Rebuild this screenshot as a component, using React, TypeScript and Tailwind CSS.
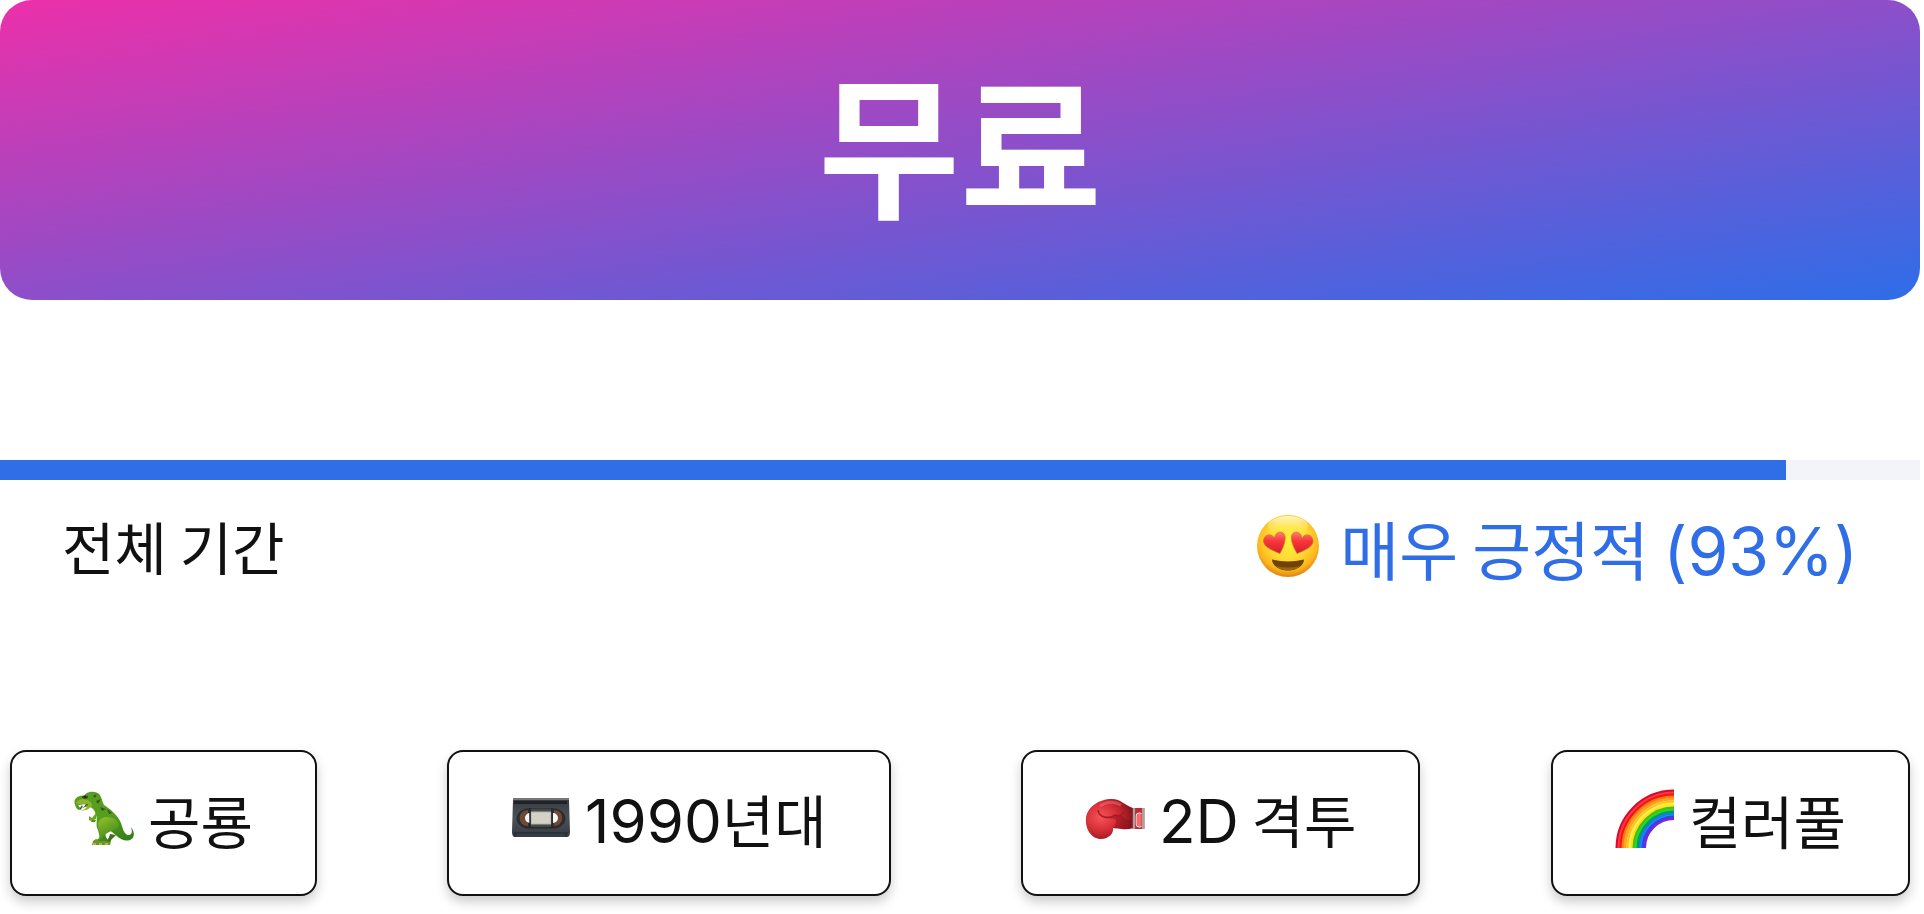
import type { ReactNode } from "react";

const HeartEyes = () => (
  <svg viewBox="0 0 64 64" className="size-16 shrink-0" aria-hidden="true">
    <defs>
      <radialGradient id="face" cx="50%" cy="40%" r="62%">
        <stop offset="0" stopColor="#fff03c" />
        <stop offset="0.5" stopColor="#ffdc35" />
        <stop offset="0.8" stopColor="#fcb51d" />
        <stop offset="1" stopColor="#d87c09" />
      </radialGradient>
      <linearGradient id="gloss" x1="0" y1="0" x2="0" y2="1">
        <stop offset="0" stopColor="#fffbd8" stopOpacity="0.9" />
        <stop offset="1" stopColor="#ffe84a" stopOpacity="0" />
      </linearGradient>
      <linearGradient id="heart" x1="0" y1="0" x2="0" y2="1">
        <stop offset="0" stopColor="#ff7d7b" />
        <stop offset="0.4" stopColor="#f8383d" />
        <stop offset="1" stopColor="#d81d2b" />
      </linearGradient>
    </defs>
    <circle cx="32" cy="32" r="31" fill="url(#face)" />
    <ellipse cx="32" cy="12" rx="20" ry="10" fill="url(#gloss)" />
    <path d="M16 45.500q16 4 32 0c0 6-7 11-16 11s-16-5-16-11Z" fill="#704307" />
    <path d="M20 52q12 3 24 0-5 4.500-12 4.500t-12-4.500Z" fill="#9a6411" />
    <path d="M24 39.500C15 36 6.500 32 7.500 26c1-6 8-7 11-2 1-7 9-8 10.500-2 1 5-2 12-5 17.500Z" fill="url(#heart)" stroke="#d8771b" strokeWidth="0.7" />
    <path d="M41 39.500c9-3.500 17-7.500 16-13.500-1-6-8-7-11-2-1-7-9-8-10.500-2-1 5 2.500 12 5.500 17.500Z" fill="url(#heart)" stroke="#d8771b" strokeWidth="0.7" />
  </svg>
);

const Dinosaur = () => (
  <svg viewBox="0 -2 60 60" className="size-15 shrink-0" aria-hidden="true">
    <defs>
      <linearGradient id="skin" x1="0.2" y1="0" x2="0.7" y2="1">
        <stop offset="0" stopColor="#579d22" />
        <stop offset="0.5" stopColor="#55a01b" />
        <stop offset="1" stopColor="#35801b" />
      </linearGradient>
      <linearGradient id="thigh" x1="0" y1="0" x2="0.5" y2="1">
        <stop offset="0" stopColor="#97c22c" />
        <stop offset="1" stopColor="#3e8819" />
      </linearGradient>
    </defs>
    <path d="M36 43q-1 5-4 7l-4 2 1 2h7l1-5 5-5Z" fill="#3c7015" />
    <path d="M0.500 12C0 7 5 4 10 5c2-5 12-6 16-1 2 3 2 7 4 10 6 4 13 9 17 18 2 6 3 11 7 12 5 0 4-5 3-8 4 5 4 11-1 13-9 3-15-7-21-10-5 3-4 6-1 10l-1 3H20l2-3 4-2-2-8c-3-5 0-9-2-15-1-5-4-8-7-8-4-1-7 1-10 3-2 0-4-4-4.500-7Z" fill="url(#skin)" />
    <path d="M33 26c-7 0-11 6-8 13 2 4 0 8-1 11l4-3c3-7 15-7 17-12 1-5-5-9-12-9Z" fill="url(#thigh)" />
    <path d="M1.500 12c4 2 9 0 13 1-2 5-5 6-8 6 2 1 6 0 8-1l4-4c-4-7-12-8-17-2Z" fill="#8db42b" />
    <path d="m4 14 10-1-7 6-1-1Z" fill="#364f1a" />
    <path d="m4 14 2 3 2-3 1 3 3-4Zm3 5 1-3 2 2Z" fill="#fff" />
    <ellipse cx="11" cy="6" rx="3" ry="1.800" fill="#32511a" />
    <circle cx="11" cy="6" r="1" fill="#171b0d" />
    <path d="m19 5 4-2-2 4Zm3 5 5-2-3 5Zm4 6 6 2-4 2Zm7 2 5 4-3 1Z" fill="#3c541b" />
    <path d="M22 22l-4 5-3-2 0 4 2 1 5-2Z" fill="#69a91e" />
    <path d="M18 29h4l-1 2h-4Z" fill="#568a19" />
    <path d="m19 50 3-2 3 2h7l4 1v3H18Z" fill="#6c961d" />
    <path d="M19 53h3m3 0h3m3 0h3" stroke="#e5d5a0" strokeWidth="1" />
  </svg>
);

const Videocassette = () => (
  <svg viewBox="0 0 60 60" className="size-15 shrink-0" aria-hidden="true">
    <defs>
      <linearGradient id="tape" x1="0" y1="0" x2="0" y2="1">
        <stop offset="0" stopColor="#343a3f" />
        <stop offset="0.5" stopColor="#4b5257" />
        <stop offset="1" stopColor="#353b40" />
      </linearGradient>
    </defs>
    <path d="M2 9h56v2l1 32q0 5-3 5H4q-3 0-3-5L2 11Z" fill="url(#tape)" />
    <path d="M2 10h56" stroke="#8b8e90" strokeWidth="1.5" />
    <path d="M3 12h53v3H3Z" fill="#1f2327" />
    <path d="M3 44h54M4 44v4m51-4v4" stroke="#202428" />
    <path d="M15 20h30q9 3 9 9.500t-9 9.500H15q-9-3-9-9.500t9-9.500Z" fill="#302d2b" stroke="#24282b" />
    <path d="M17 21c-11 0-11 16 0 16Zm26 0c11 0 11 16 0 16Z" fill="#6e4938" />
    <path d="M19 24a5 5 0 0 0 0 10ZM42 24a5 5 0 0 1 0 10Z" fill="#faf9f5" />
    <path d="M19 20h23v18H19Z" fill="#42484b" />
    <path d="M20 23h20v12H20Z" fill="#d5d1c4" stroke="#bbb5a7" />
    <path d="M19 19v20m22-20v20" stroke="#202629" strokeWidth="1.5" />
  </svg>
);

const BoxingGlove = () => (
  <svg viewBox="0 0 60 60" className="size-15 shrink-0" aria-hidden="true">
    <defs>
      <radialGradient id="leather" cx="32%" cy="45%" r="65%">
        <stop offset="0" stopColor="#f8555a" />
        <stop offset="0.55" stopColor="#d32c35" />
        <stop offset="1" stopColor="#8d151e" />
      </radialGradient>
    </defs>
    <path d="M48 19h11v21H48Z" fill="#c9252e" />
    <path d="M1 29C2 18 14 10 27 10c9 0 12 6 21 9v20q-6 2-11 1-4-1-9-1c1 5-4 11-12 11C7 50 0 41 1 29Z" fill="url(#leather)" />
    <path d="M14 23c3 8 11 5 16 7 3 2 0 7-2 9 5 1 13 2 20 0V31C38 34 39 22 30 27c-8 2-13 0-16-4Z" fill="#8e0f19" opacity="0.5" />
    <path d="M13 21c1 9 12 9 17 5 5 2 8-1 9-4" fill="none" stroke="#a71925" strokeWidth="1.5" />
    <path d="M15 17q10-7 21-1" fill="none" stroke="#ff8588" strokeWidth="3" opacity="0.4" />
    <rect x="51" y="24" width="7" height="14" rx="3" fill="#ff6669" stroke="#eee" />
    <path d="M49 19v21M58 19v21" stroke="#84595b" strokeWidth="3" />
    <path d="M49 19v21M58 19v21" stroke="#e7e1df" strokeWidth="1" />
  </svg>
);

const bands = [
  ["#dc0924", 57], ["#ff3151", 55], ["#e91a13", 53], ["#ff7908", 51], ["#ffa323", 49],
  ["#ffc21a", 46], ["#fff04c", 44], ["#ffe01b", 42], ["#49bd13", 40], ["#25dc28", 38],
  ["#079e55", 36], ["#147cf1", 34], ["#218fff", 32], ["#2150d5", 31], ["#7028e7", 29.5],
] as const;

const Rainbow = () => (
  <svg viewBox="0 0 60 60" className="size-15 shrink-0" aria-hidden="true">
    {bands.map(([color, r]) => (
      <path key={r} d={`M${59 - r} 59A${r} ${r} 0 0 1 59 ${59 - r}`} fill="none" stroke={color} strokeWidth="3" />
    ))}
  </svg>
);

const Latin = ({ children }: { children: ReactNode }) => (
  <span className="font-['Inter',sans-serif] text-[60px]">{children}</span>
);

const Tag = ({ icon, children }: { icon: ReactNode; children: ReactNode }) => (
  <button
    type="button"
    className="flex h-[146px] items-center gap-[14px] rounded-2xl border-2 border-[#111] bg-white px-[62px] pb-2 whitespace-nowrap shadow-[0_6px_12px_rgba(0,0,0,0.2)]"
  >
    {icon}
    <span className="leading-[72px]">{children}</span>
  </button>
);

export default function App() {
  const score = 93;
  return (
    <main className="overflow-hidden bg-white pr-1 pb-5 font-['Noto_Sans_CJK_KR',sans-serif] text-[57px] text-[#111]">
      <h1 className="flex h-[300px] items-center justify-center rounded-[32px] bg-[linear-gradient(to_bottom_right,#ec30aa,#2e6de8)] pb-5 text-[154px] leading-none font-bold text-white">
        무료
      </h1>
      <section className="mt-40">
        <div className="h-5 bg-[#f3f4f9]" role="progressbar" aria-label="전체 기간" aria-valuenow={score} aria-valuemin={0} aria-valuemax={100}>
          <div className="h-full bg-[#306ee8]" style={{ width: `${score}%` }} />
        </div>
        <div className="flex h-[140px] items-center justify-between px-[62px]">
          <span className="pb-2">전체 기간</span>
          <span className="flex items-center gap-5 text-[64px] text-[#306ee8]">
            <span className="pb-2">
              <HeartEyes />
            </span>
            <span>
              매우 긍정적 <span className="font-['Inter',sans-serif] text-[66px]">({score}%)</span>
            </span>
          </span>
        </div>
      </section>
      <nav aria-label="태그" className="mt-[130px] flex justify-between px-[10px]">
        <Tag icon={<Dinosaur />}>공룡</Tag>
        <Tag icon={<Videocassette />}>
          <Latin>1990</Latin>년대
        </Tag>
        <Tag icon={<BoxingGlove />}>
          <Latin>2D</Latin> 격투
        </Tag>
        <Tag icon={<Rainbow />}>컬러풀</Tag>
      </nav>
    </main>
  );
}
